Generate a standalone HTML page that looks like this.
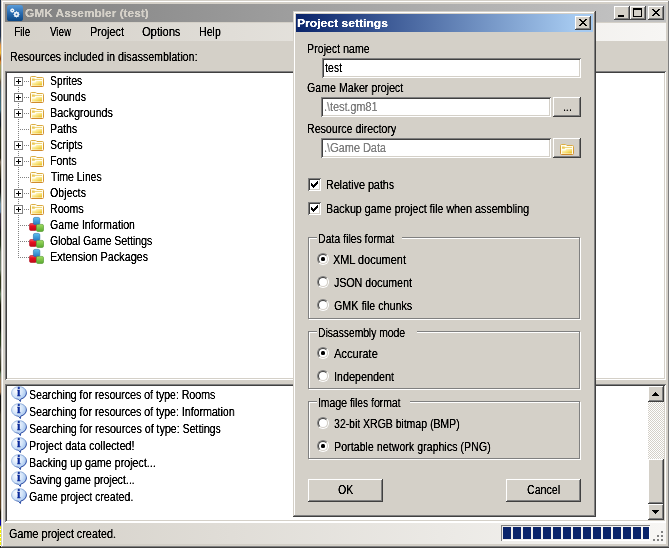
<!DOCTYPE html>
<html><head><meta charset="utf-8"><title>GMK Assembler (test)</title>
<style>
*{box-sizing:border-box;margin:0;padding:0}
html,body{width:669px;height:548px;overflow:hidden;background:#d4d0c8}
body{position:relative;font-family:"Liberation Sans",sans-serif;font-size:12px;color:#000;line-height:14px}
.a{position:absolute}
.t,.b{position:absolute;white-space:nowrap;will-change:transform;transform-origin:0 50%;line-height:14px;filter:url(#th)}
.t{font-size:12px}
.b{font-size:11px;font-weight:bold}
.win{background:#d4d0c8;box-shadow:inset -1px -1px 0 #404040,inset 1px 1px 0 #d4d0c8,inset -2px -2px 0 #808080,inset 2px 2px 0 #fff}
.sunk{background:#fff;box-shadow:inset 1px 1px 0 #808080,inset -1px -1px 0 #fff,inset 2px 2px 0 #404040,inset -2px -2px 0 #d4d0c8}
.btn{background:#d4d0c8;box-shadow:inset -1px -1px 0 #404040,inset 1px 1px 0 #fff,inset -2px -2px 0 #808080,inset 2px 2px 0 #d4d0c8}
.grp{border:1px solid #808080;box-shadow:1px 1px 0 #fff,inset 1px 1px 0 #fff}
.gl{position:absolute;background:#d4d0c8;height:4px}
.hd{background:repeating-linear-gradient(90deg,#808080 0,#808080 1px,transparent 1px,transparent 2px)}
.vd{background:repeating-linear-gradient(#808080 0,#808080 1px,transparent 1px,transparent 2px)}
.k{position:absolute;background:#000}
svg{position:absolute;overflow:visible}
</style></head><body>
<svg width="0" height="0" style="left:0;top:0"><filter id="th" x="0" y="0" width="100%" height="100%" color-interpolation-filters="sRGB"><feComponentTransfer><feFuncA type="linear" slope="1.9" intercept="-0.2"/></feComponentTransfer></filter></svg>

<div class="a" style="left:0;top:0;width:1px;height:527px;background:linear-gradient(#1a2a44 0px,#22304a 36px,#5a6a78 41px,#e09040 45px,#f0c040 53px,#a05818 57px,#804010 59px,#e08830 62px,#a0a060 66px,#909060 78px,#605040 82px,#406070 90px,#407080 110px,#203040 114px,#101820 125px,#303820 130px,#202010 158px,#807060 162px,#504830 167px,#202010 178px,#080808 180px,#101010 192px,#304038 196px,#7090a0 204px,#6080a0 212px,#403848 214px,#302838 225px,#181818 232px,#203018 245px,#607060 252px,#708070 270px,#303818 277px,#303820 288px,#608060 294px,#405038 300px,#181808 305px,#080808 328px,#203818 335px,#304020 345px,#606060 350px,#484838 360px,#303018 370px,#608060 374px,#a08060 380px,#a07850 392px,#101010 396px,#181408 410px,#403820 415px,#403820 460px,#505040 465px,#5a4020 472px,#5a4020 508px,#181408 512px,#181408 519px,#0000a0 520px,#0000a0 525px,#808080 526px,#f4f000 527px)"></div>
<div class="a" style="left:0;top:527px;width:1px;height:19px;background:repeating-linear-gradient(#f4f000 0,#f4f000 2px,#fffff0 2px,#fffff0 3px,#f4f000 3px,#f4f000 4px)"></div>
<div class="a" style="left:0;top:546px;width:1px;height:2px;background:#202020"></div>
<div class="a win" style="left:1px;top:0;width:669px;height:548px"></div>
<div class="a" style="left:5px;top:4px;width:661px;height:18px;background:linear-gradient(90deg,#808080 0,#c0c0c0 92%)"></div>
<svg style="left:7px;top:5px" width="16" height="16" viewBox="0 0 16 16"><defs><linearGradient id="ig" x1="0" y1="0" x2="0" y2="1"><stop offset="0" stop-color="#5a9cd8"/><stop offset=".5" stop-color="#2a6cb0"/><stop offset="1" stop-color="#0a4684"/></linearGradient></defs><rect x="0" y="0" width="16" height="16" rx="2.6" fill="url(#ig)"/><g fill="none" stroke="#fff" opacity=".92"><circle cx="5.300" cy="5.500" r="1.300" stroke-width="1.500"/><circle cx="9.500" cy="9.400" r="1.700" stroke-width="1.700"/><path d="M9.500 6.300v6.200M6.400 9.400h6.200M7.300 7.200l4.400 4.400M11.700 7.200l-4.400 4.400" stroke-width=".9"/><path d="M5.300 3.400v4.200M3.200 5.500h4.200" stroke-width=".8" opacity=".7"/></g><circle cx="9.500" cy="9.400" r=".9" fill="#2a68ac"/><circle cx="5.300" cy="5.500" r=".6" fill="#3c7cc0"/></svg>
<span class="b" style="left:25.00px;top:6px;transform:scaleX(1.0800);color:#d4d0c8">GMK Assembler (test)</span>
<div class="a btn" style="left:614px;top:6px;width:16px;height:14px"></div><div class="k" style="left:618px;top:15px;width:6px;height:2px"></div>
<div class="a btn" style="left:630px;top:6px;width:16px;height:14px"></div><div class="a" style="left:633px;top:8px;width:9px;height:9px;border:1px solid #000;border-top-width:2px"></div>
<div class="a btn" style="left:648px;top:6px;width:16px;height:14px"></div><div class="k" style="left:652px;top:9px;width:2px;height:1px"></div><div class="k" style="left:658px;top:9px;width:2px;height:1px"></div><div class="k" style="left:653px;top:10px;width:2px;height:1px"></div><div class="k" style="left:657px;top:10px;width:2px;height:1px"></div><div class="k" style="left:654px;top:11px;width:4px;height:1px"></div><div class="k" style="left:655px;top:12px;width:2px;height:1px"></div><div class="k" style="left:654px;top:13px;width:4px;height:1px"></div><div class="k" style="left:653px;top:14px;width:2px;height:1px"></div><div class="k" style="left:657px;top:14px;width:2px;height:1px"></div><div class="k" style="left:652px;top:15px;width:2px;height:1px"></div><div class="k" style="left:658px;top:15px;width:2px;height:1px"></div>
<div class="a" style="left:5px;top:23px;width:661px;height:18px;background:linear-gradient(90deg,#d4d0c8,#f7f6f4)"></div>
<span class="t" style="left:13.60px;top:25px;transform:scaleX(0.8352)">File</span>
<span class="t" style="left:50.30px;top:25px;transform:scaleX(0.8157)">View</span>
<span class="t" style="left:89.60px;top:25px;transform:scaleX(0.9099)">Project</span>
<span class="t" style="left:142.00px;top:25px;transform:scaleX(0.9305)">Options</span>
<span class="t" style="left:199.00px;top:25px;transform:scaleX(0.8850)">Help</span>
<span class="t" style="left:9.60px;top:50px;transform:scaleX(0.8893)">Resources included in disassemblation:</span>
<div class="a sunk" style="left:5px;top:71px;width:661px;height:309px"></div>
<div class="a vd" style="left:18px;top:83px;width:1px;height:175px"></div>
<div class="a hd" style="left:24px;top:81px;width:5px;height:1px"></div>
<div class="a" style="left:14px;top:77px;width:9px;height:9px;border:1px solid #808080;background:#fff"></div>
<div class="k" style="left:16px;top:81px;width:5px;height:1px"></div>
<div class="k" style="left:18px;top:79px;width:1px;height:5px"></div>
<svg style="left:29px;top:73px" width="16" height="16" viewBox="0 0 16 16"><defs><linearGradient id="fg0" x1="0" y1="0" x2="1" y2="1"><stop offset="0" stop-color="#fffbe0"/><stop offset=".45" stop-color="#fbe88a"/><stop offset="1" stop-color="#e8bc1c"/></linearGradient><linearGradient id="fs0" x1="0" y1="0" x2="0" y2="1"><stop offset="0" stop-color="#dcae44"/><stop offset="1" stop-color="#d08a2c"/></linearGradient></defs><path d="M1.500 4.500q0-1 1-1h4q.7 0 1 .5l.5.500h5.500q1 0 1 1v7q0 1-1 1h-11q-1 0-1-1z" fill="#fffdf0" stroke="url(#fs0)"/><path d="M3 5.400h2.600v.8H13v.9H6.200l-.6.700H3z" fill="#ecca58"/><path d="M3 9.400h3.400l1-1.300H13v4.300H3z" fill="url(#fg0)"/></svg>
<span class="t" style="left:50.10px;top:74px;transform:scaleX(0.8601)">Sprites</span>
<div class="a hd" style="left:24px;top:97px;width:5px;height:1px"></div>
<div class="a" style="left:14px;top:93px;width:9px;height:9px;border:1px solid #808080;background:#fff"></div>
<div class="k" style="left:16px;top:97px;width:5px;height:1px"></div>
<div class="k" style="left:18px;top:95px;width:1px;height:5px"></div>
<svg style="left:29px;top:89px" width="16" height="16" viewBox="0 0 16 16"><defs><linearGradient id="fg1" x1="0" y1="0" x2="1" y2="1"><stop offset="0" stop-color="#fffbe0"/><stop offset=".45" stop-color="#fbe88a"/><stop offset="1" stop-color="#e8bc1c"/></linearGradient><linearGradient id="fs1" x1="0" y1="0" x2="0" y2="1"><stop offset="0" stop-color="#dcae44"/><stop offset="1" stop-color="#d08a2c"/></linearGradient></defs><path d="M1.500 4.500q0-1 1-1h4q.7 0 1 .5l.5.500h5.500q1 0 1 1v7q0 1-1 1h-11q-1 0-1-1z" fill="#fffdf0" stroke="url(#fs1)"/><path d="M3 5.400h2.600v.8H13v.9H6.200l-.6.700H3z" fill="#ecca58"/><path d="M3 9.400h3.400l1-1.300H13v4.300H3z" fill="url(#fg1)"/></svg>
<span class="t" style="left:50.10px;top:90px;transform:scaleX(0.8850)">Sounds</span>
<div class="a hd" style="left:24px;top:113px;width:5px;height:1px"></div>
<div class="a" style="left:14px;top:109px;width:9px;height:9px;border:1px solid #808080;background:#fff"></div>
<div class="k" style="left:16px;top:113px;width:5px;height:1px"></div>
<div class="k" style="left:18px;top:111px;width:1px;height:5px"></div>
<svg style="left:29px;top:105px" width="16" height="16" viewBox="0 0 16 16"><defs><linearGradient id="fg2" x1="0" y1="0" x2="1" y2="1"><stop offset="0" stop-color="#fffbe0"/><stop offset=".45" stop-color="#fbe88a"/><stop offset="1" stop-color="#e8bc1c"/></linearGradient><linearGradient id="fs2" x1="0" y1="0" x2="0" y2="1"><stop offset="0" stop-color="#dcae44"/><stop offset="1" stop-color="#d08a2c"/></linearGradient></defs><path d="M1.500 4.500q0-1 1-1h4q.7 0 1 .5l.5.500h5.500q1 0 1 1v7q0 1-1 1h-11q-1 0-1-1z" fill="#fffdf0" stroke="url(#fs2)"/><path d="M3 5.400h2.600v.8H13v.9H6.200l-.6.700H3z" fill="#ecca58"/><path d="M3 9.400h3.400l1-1.300H13v4.300H3z" fill="url(#fg2)"/></svg>
<span class="t" style="left:50.10px;top:106px;transform:scaleX(0.8981)">Backgrounds</span>
<div class="a hd" style="left:20px;top:129px;width:9px;height:1px"></div>
<svg style="left:29px;top:121px" width="16" height="16" viewBox="0 0 16 16"><defs><linearGradient id="fg3" x1="0" y1="0" x2="1" y2="1"><stop offset="0" stop-color="#fffbe0"/><stop offset=".45" stop-color="#fbe88a"/><stop offset="1" stop-color="#e8bc1c"/></linearGradient><linearGradient id="fs3" x1="0" y1="0" x2="0" y2="1"><stop offset="0" stop-color="#dcae44"/><stop offset="1" stop-color="#d08a2c"/></linearGradient></defs><path d="M1.500 4.500q0-1 1-1h4q.7 0 1 .5l.5.500h5.500q1 0 1 1v7q0 1-1 1h-11q-1 0-1-1z" fill="#fffdf0" stroke="url(#fs3)"/><path d="M3 5.400h2.600v.8H13v.9H6.200l-.6.700H3z" fill="#ecca58"/><path d="M3 9.400h3.400l1-1.300H13v4.300H3z" fill="url(#fg3)"/></svg>
<span class="t" style="left:50.10px;top:122px;transform:scaleX(0.8850)">Paths</span>
<div class="a hd" style="left:24px;top:145px;width:5px;height:1px"></div>
<div class="a" style="left:14px;top:141px;width:9px;height:9px;border:1px solid #808080;background:#fff"></div>
<div class="k" style="left:16px;top:145px;width:5px;height:1px"></div>
<div class="k" style="left:18px;top:143px;width:1px;height:5px"></div>
<svg style="left:29px;top:137px" width="16" height="16" viewBox="0 0 16 16"><defs><linearGradient id="fg4" x1="0" y1="0" x2="1" y2="1"><stop offset="0" stop-color="#fffbe0"/><stop offset=".45" stop-color="#fbe88a"/><stop offset="1" stop-color="#e8bc1c"/></linearGradient><linearGradient id="fs4" x1="0" y1="0" x2="0" y2="1"><stop offset="0" stop-color="#dcae44"/><stop offset="1" stop-color="#d08a2c"/></linearGradient></defs><path d="M1.500 4.500q0-1 1-1h4q.7 0 1 .5l.5.500h5.500q1 0 1 1v7q0 1-1 1h-11q-1 0-1-1z" fill="#fffdf0" stroke="url(#fs4)"/><path d="M3 5.400h2.600v.8H13v.9H6.200l-.6.700H3z" fill="#ecca58"/><path d="M3 9.400h3.400l1-1.300H13v4.300H3z" fill="url(#fg4)"/></svg>
<span class="t" style="left:50.10px;top:138px;transform:scaleX(0.8850)">Scripts</span>
<div class="a hd" style="left:24px;top:161px;width:5px;height:1px"></div>
<div class="a" style="left:14px;top:157px;width:9px;height:9px;border:1px solid #808080;background:#fff"></div>
<div class="k" style="left:16px;top:161px;width:5px;height:1px"></div>
<div class="k" style="left:18px;top:159px;width:1px;height:5px"></div>
<svg style="left:29px;top:153px" width="16" height="16" viewBox="0 0 16 16"><defs><linearGradient id="fg5" x1="0" y1="0" x2="1" y2="1"><stop offset="0" stop-color="#fffbe0"/><stop offset=".45" stop-color="#fbe88a"/><stop offset="1" stop-color="#e8bc1c"/></linearGradient><linearGradient id="fs5" x1="0" y1="0" x2="0" y2="1"><stop offset="0" stop-color="#dcae44"/><stop offset="1" stop-color="#d08a2c"/></linearGradient></defs><path d="M1.500 4.500q0-1 1-1h4q.7 0 1 .5l.5.500h5.500q1 0 1 1v7q0 1-1 1h-11q-1 0-1-1z" fill="#fffdf0" stroke="url(#fs5)"/><path d="M3 5.400h2.600v.8H13v.9H6.200l-.6.700H3z" fill="#ecca58"/><path d="M3 9.400h3.400l1-1.300H13v4.300H3z" fill="url(#fg5)"/></svg>
<span class="t" style="left:50.10px;top:154px;transform:scaleX(0.8850)">Fonts</span>
<div class="a hd" style="left:20px;top:177px;width:9px;height:1px"></div>
<svg style="left:29px;top:169px" width="16" height="16" viewBox="0 0 16 16"><defs><linearGradient id="fg6" x1="0" y1="0" x2="1" y2="1"><stop offset="0" stop-color="#fffbe0"/><stop offset=".45" stop-color="#fbe88a"/><stop offset="1" stop-color="#e8bc1c"/></linearGradient><linearGradient id="fs6" x1="0" y1="0" x2="0" y2="1"><stop offset="0" stop-color="#dcae44"/><stop offset="1" stop-color="#d08a2c"/></linearGradient></defs><path d="M1.500 4.500q0-1 1-1h4q.7 0 1 .5l.5.500h5.500q1 0 1 1v7q0 1-1 1h-11q-1 0-1-1z" fill="#fffdf0" stroke="url(#fs6)"/><path d="M3 5.400h2.600v.8H13v.9H6.200l-.6.700H3z" fill="#ecca58"/><path d="M3 9.400h3.400l1-1.300H13v4.300H3z" fill="url(#fg6)"/></svg>
<span class="t" style="left:51.00px;top:170px;transform:scaleX(0.8694)">Time Lines</span>
<div class="a hd" style="left:24px;top:193px;width:5px;height:1px"></div>
<div class="a" style="left:14px;top:189px;width:9px;height:9px;border:1px solid #808080;background:#fff"></div>
<div class="k" style="left:16px;top:193px;width:5px;height:1px"></div>
<div class="k" style="left:18px;top:191px;width:1px;height:5px"></div>
<svg style="left:29px;top:185px" width="16" height="16" viewBox="0 0 16 16"><defs><linearGradient id="fg7" x1="0" y1="0" x2="1" y2="1"><stop offset="0" stop-color="#fffbe0"/><stop offset=".45" stop-color="#fbe88a"/><stop offset="1" stop-color="#e8bc1c"/></linearGradient><linearGradient id="fs7" x1="0" y1="0" x2="0" y2="1"><stop offset="0" stop-color="#dcae44"/><stop offset="1" stop-color="#d08a2c"/></linearGradient></defs><path d="M1.500 4.500q0-1 1-1h4q.7 0 1 .5l.5.500h5.500q1 0 1 1v7q0 1-1 1h-11q-1 0-1-1z" fill="#fffdf0" stroke="url(#fs7)"/><path d="M3 5.400h2.600v.8H13v.9H6.200l-.6.700H3z" fill="#ecca58"/><path d="M3 9.400h3.400l1-1.300H13v4.300H3z" fill="url(#fg7)"/></svg>
<span class="t" style="left:50.10px;top:186px;transform:scaleX(0.8850)">Objects</span>
<div class="a hd" style="left:24px;top:209px;width:5px;height:1px"></div>
<div class="a" style="left:14px;top:205px;width:9px;height:9px;border:1px solid #808080;background:#fff"></div>
<div class="k" style="left:16px;top:209px;width:5px;height:1px"></div>
<div class="k" style="left:18px;top:207px;width:1px;height:5px"></div>
<svg style="left:29px;top:201px" width="16" height="16" viewBox="0 0 16 16"><defs><linearGradient id="fg8" x1="0" y1="0" x2="1" y2="1"><stop offset="0" stop-color="#fffbe0"/><stop offset=".45" stop-color="#fbe88a"/><stop offset="1" stop-color="#e8bc1c"/></linearGradient><linearGradient id="fs8" x1="0" y1="0" x2="0" y2="1"><stop offset="0" stop-color="#dcae44"/><stop offset="1" stop-color="#d08a2c"/></linearGradient></defs><path d="M1.500 4.500q0-1 1-1h4q.7 0 1 .5l.5.500h5.500q1 0 1 1v7q0 1-1 1h-11q-1 0-1-1z" fill="#fffdf0" stroke="url(#fs8)"/><path d="M3 5.400h2.600v.8H13v.9H6.200l-.6.700H3z" fill="#ecca58"/><path d="M3 9.400h3.400l1-1.300H13v4.300H3z" fill="url(#fg8)"/></svg>
<span class="t" style="left:50.10px;top:202px;transform:scaleX(0.8850)">Rooms</span>
<div class="a hd" style="left:20px;top:225px;width:9px;height:1px"></div>
<svg style="left:29px;top:217px" width="16" height="16" viewBox="0 0 16 16"><defs><linearGradient id="cb9" x1="0" y1="0" x2="0" y2="1"><stop offset="0" stop-color="#5cc0f0"/><stop offset="1" stop-color="#2878c0"/></linearGradient><linearGradient id="cr9" x1="0" y1="0" x2="0" y2="1"><stop offset="0" stop-color="#f86068"/><stop offset=".35" stop-color="#e81020"/><stop offset="1" stop-color="#c00818"/></linearGradient><linearGradient id="cg9" x1="0" y1="0" x2="0" y2="1"><stop offset="0" stop-color="#a0dc60"/><stop offset="1" stop-color="#58a830"/></linearGradient></defs><rect x=".5" y="6.500" width="7" height="7" rx="1.400" fill="url(#cr9)" stroke="#b01020" stroke-width=".6"/><rect x="4.400" y=".4" width="6.400" height="7.200" rx="1.500" fill="url(#cb9)" stroke="#2468a8" stroke-width=".6"/><rect x="7.400" y="7.400" width="7.100" height="7.100" rx="1.400" fill="url(#cg9)" stroke="#4c9428" stroke-width=".6"/></svg>
<span class="t" style="left:50.10px;top:218px;transform:scaleX(0.8850)">Game Information</span>
<div class="a hd" style="left:20px;top:241px;width:9px;height:1px"></div>
<svg style="left:29px;top:233px" width="16" height="16" viewBox="0 0 16 16"><defs><linearGradient id="cb10" x1="0" y1="0" x2="0" y2="1"><stop offset="0" stop-color="#5cc0f0"/><stop offset="1" stop-color="#2878c0"/></linearGradient><linearGradient id="cr10" x1="0" y1="0" x2="0" y2="1"><stop offset="0" stop-color="#f86068"/><stop offset=".35" stop-color="#e81020"/><stop offset="1" stop-color="#c00818"/></linearGradient><linearGradient id="cg10" x1="0" y1="0" x2="0" y2="1"><stop offset="0" stop-color="#a0dc60"/><stop offset="1" stop-color="#58a830"/></linearGradient></defs><rect x=".5" y="6.500" width="7" height="7" rx="1.400" fill="url(#cr10)" stroke="#b01020" stroke-width=".6"/><rect x="4.400" y=".4" width="6.400" height="7.200" rx="1.500" fill="url(#cb10)" stroke="#2468a8" stroke-width=".6"/><rect x="7.400" y="7.400" width="7.100" height="7.100" rx="1.400" fill="url(#cg10)" stroke="#4c9428" stroke-width=".6"/></svg>
<span class="t" style="left:50.10px;top:234px;transform:scaleX(0.8695)">Global Game Settings</span>
<div class="a hd" style="left:20px;top:257px;width:9px;height:1px"></div>
<svg style="left:29px;top:249px" width="16" height="16" viewBox="0 0 16 16"><defs><linearGradient id="cb11" x1="0" y1="0" x2="0" y2="1"><stop offset="0" stop-color="#5cc0f0"/><stop offset="1" stop-color="#2878c0"/></linearGradient><linearGradient id="cr11" x1="0" y1="0" x2="0" y2="1"><stop offset="0" stop-color="#f86068"/><stop offset=".35" stop-color="#e81020"/><stop offset="1" stop-color="#c00818"/></linearGradient><linearGradient id="cg11" x1="0" y1="0" x2="0" y2="1"><stop offset="0" stop-color="#a0dc60"/><stop offset="1" stop-color="#58a830"/></linearGradient></defs><rect x=".5" y="6.500" width="7" height="7" rx="1.400" fill="url(#cr11)" stroke="#b01020" stroke-width=".6"/><rect x="4.400" y=".4" width="6.400" height="7.200" rx="1.500" fill="url(#cb11)" stroke="#2468a8" stroke-width=".6"/><rect x="7.400" y="7.400" width="7.100" height="7.100" rx="1.400" fill="url(#cg11)" stroke="#4c9428" stroke-width=".6"/></svg>
<span class="t" style="left:50.10px;top:250px;transform:scaleX(0.9018)">Extension Packages</span>
<div class="a sunk" style="left:5px;top:384px;width:661px;height:138px"></div>
<svg style="left:11px;top:386px;will-change:transform" width="16" height="16" viewBox="0 0 16 16"><defs><radialGradient id="ib0" cx=".35" cy=".3" r=".8"><stop offset="0" stop-color="#fff"/><stop offset=".5" stop-color="#d0e2f8"/><stop offset="1" stop-color="#8cb4e8"/></radialGradient><linearGradient id="is0" x1="0" y1="0" x2="1" y2="1"><stop offset="0" stop-color="#b8cce8"/><stop offset=".45" stop-color="#88a8d8"/><stop offset=".75" stop-color="#2c4ca4"/><stop offset="1" stop-color="#0c2484"/></linearGradient></defs><path d="M8 .6c4.100 0 7.400 2.800 7.400 6.300 0 3-2.400 5.400-5.600 6.100L9.400 15.500 7.300 13.200C3.500 12.900.6 10.200.6 6.900.6 3.400 3.900.6 8 .6z" fill="url(#ib0)" stroke="url(#is0)" stroke-width="1"/><text x="7.700" y="10" font-family="Liberation Serif,serif" font-weight="bold" font-size="12.500" text-anchor="middle" fill="#0c2c9c" stroke="#0c2c9c" stroke-width=".3">i</text></svg>
<span class="t" style="left:29.30px;top:388px;transform:scaleX(0.8807)">Searching for resources of type: Rooms</span>
<svg style="left:11px;top:403px;will-change:transform" width="16" height="16" viewBox="0 0 16 16"><defs><radialGradient id="ib1" cx=".35" cy=".3" r=".8"><stop offset="0" stop-color="#fff"/><stop offset=".5" stop-color="#d0e2f8"/><stop offset="1" stop-color="#8cb4e8"/></radialGradient><linearGradient id="is1" x1="0" y1="0" x2="1" y2="1"><stop offset="0" stop-color="#b8cce8"/><stop offset=".45" stop-color="#88a8d8"/><stop offset=".75" stop-color="#2c4ca4"/><stop offset="1" stop-color="#0c2484"/></linearGradient></defs><path d="M8 .6c4.100 0 7.400 2.800 7.400 6.300 0 3-2.400 5.400-5.600 6.100L9.400 15.500 7.300 13.200C3.500 12.900.6 10.200.6 6.900.6 3.400 3.900.6 8 .6z" fill="url(#ib1)" stroke="url(#is1)" stroke-width="1"/><text x="7.700" y="10" font-family="Liberation Serif,serif" font-weight="bold" font-size="12.500" text-anchor="middle" fill="#0c2c9c" stroke="#0c2c9c" stroke-width=".3">i</text></svg>
<span class="t" style="left:29.30px;top:405px;transform:scaleX(0.8811)">Searching for resources of type: Information</span>
<svg style="left:11px;top:420px;will-change:transform" width="16" height="16" viewBox="0 0 16 16"><defs><radialGradient id="ib2" cx=".35" cy=".3" r=".8"><stop offset="0" stop-color="#fff"/><stop offset=".5" stop-color="#d0e2f8"/><stop offset="1" stop-color="#8cb4e8"/></radialGradient><linearGradient id="is2" x1="0" y1="0" x2="1" y2="1"><stop offset="0" stop-color="#b8cce8"/><stop offset=".45" stop-color="#88a8d8"/><stop offset=".75" stop-color="#2c4ca4"/><stop offset="1" stop-color="#0c2484"/></linearGradient></defs><path d="M8 .6c4.100 0 7.400 2.800 7.400 6.300 0 3-2.400 5.400-5.600 6.100L9.400 15.500 7.300 13.200C3.500 12.900.6 10.200.6 6.900.6 3.400 3.900.6 8 .6z" fill="url(#ib2)" stroke="url(#is2)" stroke-width="1"/><text x="7.700" y="10" font-family="Liberation Serif,serif" font-weight="bold" font-size="12.500" text-anchor="middle" fill="#0c2c9c" stroke="#0c2c9c" stroke-width=".3">i</text></svg>
<span class="t" style="left:29.30px;top:422px;transform:scaleX(0.8850)">Searching for resources of type: Settings</span>
<svg style="left:11px;top:437px;will-change:transform" width="16" height="16" viewBox="0 0 16 16"><defs><radialGradient id="ib3" cx=".35" cy=".3" r=".8"><stop offset="0" stop-color="#fff"/><stop offset=".5" stop-color="#d0e2f8"/><stop offset="1" stop-color="#8cb4e8"/></radialGradient><linearGradient id="is3" x1="0" y1="0" x2="1" y2="1"><stop offset="0" stop-color="#b8cce8"/><stop offset=".45" stop-color="#88a8d8"/><stop offset=".75" stop-color="#2c4ca4"/><stop offset="1" stop-color="#0c2484"/></linearGradient></defs><path d="M8 .6c4.100 0 7.400 2.800 7.400 6.300 0 3-2.400 5.400-5.600 6.100L9.400 15.500 7.300 13.200C3.500 12.900.6 10.200.6 6.900.6 3.400 3.900.6 8 .6z" fill="url(#ib3)" stroke="url(#is3)" stroke-width="1"/><text x="7.700" y="10" font-family="Liberation Serif,serif" font-weight="bold" font-size="12.500" text-anchor="middle" fill="#0c2c9c" stroke="#0c2c9c" stroke-width=".3">i</text></svg>
<span class="t" style="left:29.30px;top:439px;transform:scaleX(0.8927)">Project data collected!</span>
<svg style="left:11px;top:454px;will-change:transform" width="16" height="16" viewBox="0 0 16 16"><defs><radialGradient id="ib4" cx=".35" cy=".3" r=".8"><stop offset="0" stop-color="#fff"/><stop offset=".5" stop-color="#d0e2f8"/><stop offset="1" stop-color="#8cb4e8"/></radialGradient><linearGradient id="is4" x1="0" y1="0" x2="1" y2="1"><stop offset="0" stop-color="#b8cce8"/><stop offset=".45" stop-color="#88a8d8"/><stop offset=".75" stop-color="#2c4ca4"/><stop offset="1" stop-color="#0c2484"/></linearGradient></defs><path d="M8 .6c4.100 0 7.400 2.800 7.400 6.300 0 3-2.400 5.400-5.600 6.100L9.400 15.500 7.300 13.200C3.500 12.900.6 10.200.6 6.900.6 3.400 3.900.6 8 .6z" fill="url(#ib4)" stroke="url(#is4)" stroke-width="1"/><text x="7.700" y="10" font-family="Liberation Serif,serif" font-weight="bold" font-size="12.500" text-anchor="middle" fill="#0c2c9c" stroke="#0c2c9c" stroke-width=".3">i</text></svg>
<span class="t" style="left:29.30px;top:456px;transform:scaleX(0.8914)">Backing up game project...</span>
<svg style="left:11px;top:471px;will-change:transform" width="16" height="16" viewBox="0 0 16 16"><defs><radialGradient id="ib5" cx=".35" cy=".3" r=".8"><stop offset="0" stop-color="#fff"/><stop offset=".5" stop-color="#d0e2f8"/><stop offset="1" stop-color="#8cb4e8"/></radialGradient><linearGradient id="is5" x1="0" y1="0" x2="1" y2="1"><stop offset="0" stop-color="#b8cce8"/><stop offset=".45" stop-color="#88a8d8"/><stop offset=".75" stop-color="#2c4ca4"/><stop offset="1" stop-color="#0c2484"/></linearGradient></defs><path d="M8 .6c4.100 0 7.400 2.800 7.400 6.300 0 3-2.400 5.400-5.600 6.100L9.400 15.500 7.300 13.200C3.500 12.900.6 10.200.6 6.900.6 3.400 3.900.6 8 .6z" fill="url(#ib5)" stroke="url(#is5)" stroke-width="1"/><text x="7.700" y="10" font-family="Liberation Serif,serif" font-weight="bold" font-size="12.500" text-anchor="middle" fill="#0c2c9c" stroke="#0c2c9c" stroke-width=".3">i</text></svg>
<span class="t" style="left:29.30px;top:473px;transform:scaleX(0.8850)">Saving game project...</span>
<svg style="left:11px;top:488px;will-change:transform" width="16" height="16" viewBox="0 0 16 16"><defs><radialGradient id="ib6" cx=".35" cy=".3" r=".8"><stop offset="0" stop-color="#fff"/><stop offset=".5" stop-color="#d0e2f8"/><stop offset="1" stop-color="#8cb4e8"/></radialGradient><linearGradient id="is6" x1="0" y1="0" x2="1" y2="1"><stop offset="0" stop-color="#b8cce8"/><stop offset=".45" stop-color="#88a8d8"/><stop offset=".75" stop-color="#2c4ca4"/><stop offset="1" stop-color="#0c2484"/></linearGradient></defs><path d="M8 .6c4.100 0 7.400 2.800 7.400 6.300 0 3-2.400 5.400-5.600 6.100L9.400 15.500 7.300 13.200C3.500 12.900.6 10.200.6 6.900.6 3.400 3.900.6 8 .6z" fill="url(#ib6)" stroke="url(#is6)" stroke-width="1"/><text x="7.700" y="10" font-family="Liberation Serif,serif" font-weight="bold" font-size="12.500" text-anchor="middle" fill="#0c2c9c" stroke="#0c2c9c" stroke-width=".3">i</text></svg>
<span class="t" style="left:29.30px;top:490px;transform:scaleX(0.8773)">Game project created.</span>
<div class="a" style="left:648px;top:386px;width:16px;height:134px;background:repeating-conic-gradient(#fff 0 25%,#d4d0c8 0 50%) 0 0/2px 2px"></div>
<div class="a btn" style="left:648px;top:386px;width:16px;height:16px"></div>
<div class="k" style="left:655px;top:392px;width:1px;height:1px"></div><div class="k" style="left:654px;top:393px;width:3px;height:1px"></div><div class="k" style="left:653px;top:394px;width:5px;height:1px"></div><div class="k" style="left:652px;top:395px;width:7px;height:1px"></div>
<div class="a btn" style="left:648px;top:504px;width:16px;height:16px"></div>
<div class="k" style="left:652px;top:510px;width:7px;height:1px"></div><div class="k" style="left:653px;top:511px;width:5px;height:1px"></div><div class="k" style="left:654px;top:512px;width:3px;height:1px"></div><div class="k" style="left:655px;top:513px;width:1px;height:1px"></div>
<div class="a btn" style="left:648px;top:459px;width:16px;height:45px"></div>
<div class="a" style="left:5px;top:522px;width:661px;height:1px;background:#fff"></div>
<div class="a" style="left:5px;top:523px;width:661px;height:21px;background:linear-gradient(90deg,#d4d0c8,#f7f6f4)"></div>
<span class="t" style="left:9.20px;top:527px;transform:scaleX(0.9003)">Game project created.</span>
<div class="a" style="left:501px;top:525px;width:149px;height:16px;box-shadow:inset 1px 1px 0 #808080,inset -1px -1px 0 #fff"></div>
<div class="k" style="left:503px;top:527px;width:8px;height:12px;background:#0a246a"></div>
<div class="k" style="left:513px;top:527px;width:8px;height:12px;background:#0a246a"></div>
<div class="k" style="left:523px;top:527px;width:8px;height:12px;background:#0a246a"></div>
<div class="k" style="left:533px;top:527px;width:8px;height:12px;background:#0a246a"></div>
<div class="k" style="left:543px;top:527px;width:8px;height:12px;background:#0a246a"></div>
<div class="k" style="left:553px;top:527px;width:8px;height:12px;background:#0a246a"></div>
<div class="k" style="left:563px;top:527px;width:8px;height:12px;background:#0a246a"></div>
<div class="k" style="left:573px;top:527px;width:8px;height:12px;background:#0a246a"></div>
<div class="k" style="left:583px;top:527px;width:8px;height:12px;background:#0a246a"></div>
<div class="k" style="left:593px;top:527px;width:8px;height:12px;background:#0a246a"></div>
<div class="k" style="left:603px;top:527px;width:8px;height:12px;background:#0a246a"></div>
<div class="k" style="left:613px;top:527px;width:8px;height:12px;background:#0a246a"></div>
<div class="k" style="left:623px;top:527px;width:8px;height:12px;background:#0a246a"></div>
<div class="k" style="left:633px;top:527px;width:8px;height:12px;background:#0a246a"></div>
<div class="k" style="left:643px;top:527px;width:6px;height:12px;background:#0a246a"></div>
<div class="k" style="left:661px;top:539px;width:2px;height:2px;background:#808080"></div>
<div class="k" style="left:661px;top:535px;width:2px;height:2px;background:#808080"></div>
<div class="k" style="left:657px;top:539px;width:2px;height:2px;background:#808080"></div>
<div class="k" style="left:661px;top:531px;width:2px;height:2px;background:#808080"></div>
<div class="k" style="left:657px;top:535px;width:2px;height:2px;background:#808080"></div>
<div class="k" style="left:653px;top:539px;width:2px;height:2px;background:#808080"></div>
<div class="a win" style="left:293px;top:11px;width:303px;height:506px"></div>
<div class="a" style="left:296px;top:14px;width:297px;height:18px;background:linear-gradient(90deg,#0a246a 0,#a6caf0 94%)"></div>
<span class="b" style="left:297.00px;top:16px;transform:scaleX(1.1022);color:#fff">Project settings</span>
<div class="a btn" style="left:575px;top:16px;width:16px;height:14px"></div><div class="k" style="left:579px;top:19px;width:2px;height:1px"></div><div class="k" style="left:585px;top:19px;width:2px;height:1px"></div><div class="k" style="left:580px;top:20px;width:2px;height:1px"></div><div class="k" style="left:584px;top:20px;width:2px;height:1px"></div><div class="k" style="left:581px;top:21px;width:4px;height:1px"></div><div class="k" style="left:582px;top:22px;width:2px;height:1px"></div><div class="k" style="left:581px;top:23px;width:4px;height:1px"></div><div class="k" style="left:580px;top:24px;width:2px;height:1px"></div><div class="k" style="left:584px;top:24px;width:2px;height:1px"></div><div class="k" style="left:579px;top:25px;width:2px;height:1px"></div><div class="k" style="left:585px;top:25px;width:2px;height:1px"></div>
<span class="t" style="left:307.30px;top:42px;transform:scaleX(0.8850)">Project name</span>
<div class="a sunk" style="left:322px;top:58px;width:259px;height:20px"></div>
<span class="t" style="left:324.70px;top:61px;transform:scaleX(0.8850)">test</span>
<span class="t" style="left:307.30px;top:81px;transform:scaleX(0.8850)">Game Maker project</span>
<div class="a sunk" style="left:321px;top:97px;width:230px;height:20px"></div>
<span class="t" style="left:323.50px;top:100px;transform:scaleX(0.9006);color:#808080">.\test.gm81</span>
<div class="a btn" style="left:553px;top:97px;width:28px;height:20px"></div>
<span class="t" style="left:562.50px;top:100px;transform:scaleX(0.8850)">...</span>
<span class="t" style="left:307.30px;top:122px;transform:scaleX(0.8850)">Resource directory</span>
<div class="a sunk" style="left:321px;top:138px;width:230px;height:20px"></div>
<span class="t" style="left:323.50px;top:141px;transform:scaleX(0.9120);color:#808080">.\Game Data</span>
<div class="a btn" style="left:553px;top:138px;width:28px;height:20px"></div>
<svg style="left:559px;top:141px" width="16" height="16" viewBox="0 0 16 16"><defs><linearGradient id="fgb" x1="0" y1="0" x2="1" y2="1"><stop offset="0" stop-color="#fffbe0"/><stop offset=".45" stop-color="#fbe88a"/><stop offset="1" stop-color="#e8bc1c"/></linearGradient><linearGradient id="fsb" x1="0" y1="0" x2="0" y2="1"><stop offset="0" stop-color="#dcae44"/><stop offset="1" stop-color="#d08a2c"/></linearGradient></defs><path d="M1.500 4.500q0-1 1-1h4q.7 0 1 .5l.5.500h5.500q1 0 1 1v7q0 1-1 1h-11q-1 0-1-1z" fill="#fffdf0" stroke="url(#fsb)"/><path d="M3 5.400h2.600v.8H13v.9H6.200l-.6.700H3z" fill="#ecca58"/><path d="M3 9.400h3.400l1-1.300H13v4.300H3z" fill="url(#fgb)"/></svg>
<div class="a sunk" style="left:308px;top:178px;width:13px;height:13px"></div><div class="k" style="left:311px;top:183px;width:1px;height:3px"></div><div class="k" style="left:312px;top:184px;width:1px;height:3px"></div><div class="k" style="left:313px;top:185px;width:1px;height:3px"></div><div class="k" style="left:314px;top:184px;width:1px;height:3px"></div><div class="k" style="left:315px;top:183px;width:1px;height:3px"></div><div class="k" style="left:316px;top:182px;width:1px;height:3px"></div><div class="k" style="left:317px;top:181px;width:1px;height:3px"></div><span class="t" style="left:326.20px;top:178px;transform:scaleX(0.8971)">Relative paths</span>
<div class="a sunk" style="left:308px;top:202px;width:13px;height:13px"></div><div class="k" style="left:311px;top:207px;width:1px;height:3px"></div><div class="k" style="left:312px;top:208px;width:1px;height:3px"></div><div class="k" style="left:313px;top:209px;width:1px;height:3px"></div><div class="k" style="left:314px;top:208px;width:1px;height:3px"></div><div class="k" style="left:315px;top:207px;width:1px;height:3px"></div><div class="k" style="left:316px;top:206px;width:1px;height:3px"></div><div class="k" style="left:317px;top:205px;width:1px;height:3px"></div><span class="t" style="left:326.20px;top:202px;transform:scaleX(0.8930)">Backup game project file when assembling</span>
<div class="a grp" style="left:308px;top:237px;width:272px;height:82px"></div><div class="gl" style="left:317px;top:236px;width:85px"></div><span class="t" style="left:318.20px;top:232px;transform:scaleX(0.8745)">Data files format</span><div class="a" style="left:317px;top:253px;width:12px;height:12px;border-radius:50%;border:1px solid;border-color:#808080 #fff #fff #808080;transform:rotate(0deg)"></div><div class="a" style="left:318px;top:254px;width:10px;height:10px;border-radius:50%;background:#fff;border:1px solid;border-color:#404040 #d4d0c8 #d4d0c8 #404040"></div><div class="a" style="left:321px;top:257px;width:4px;height:4px;border-radius:1.500px;background:#000"></div><span class="t" style="left:333.00px;top:253px;transform:scaleX(0.9078)">XML document</span><div class="a" style="left:317px;top:276px;width:12px;height:12px;border-radius:50%;border:1px solid;border-color:#808080 #fff #fff #808080;transform:rotate(0deg)"></div><div class="a" style="left:318px;top:277px;width:10px;height:10px;border-radius:50%;background:#fff;border:1px solid;border-color:#404040 #d4d0c8 #d4d0c8 #404040"></div><span class="t" style="left:333.90px;top:276px;transform:scaleX(0.8850)">JSON document</span><div class="a" style="left:317px;top:299px;width:12px;height:12px;border-radius:50%;border:1px solid;border-color:#808080 #fff #fff #808080;transform:rotate(0deg)"></div><div class="a" style="left:318px;top:300px;width:10px;height:10px;border-radius:50%;background:#fff;border:1px solid;border-color:#404040 #d4d0c8 #d4d0c8 #404040"></div><span class="t" style="left:333.60px;top:299px;transform:scaleX(0.8955)">GMK file chunks</span>
<div class="a grp" style="left:308px;top:331px;width:272px;height:58px"></div><div class="gl" style="left:317px;top:330px;width:100px"></div><span class="t" style="left:317.60px;top:326px;transform:scaleX(0.8579)">Disassembly mode</span><div class="a" style="left:317px;top:347px;width:12px;height:12px;border-radius:50%;border:1px solid;border-color:#808080 #fff #fff #808080;transform:rotate(0deg)"></div><div class="a" style="left:318px;top:348px;width:10px;height:10px;border-radius:50%;background:#fff;border:1px solid;border-color:#404040 #d4d0c8 #d4d0c8 #404040"></div><div class="a" style="left:321px;top:351px;width:4px;height:4px;border-radius:1.500px;background:#000"></div><span class="t" style="left:333.70px;top:347px;transform:scaleX(0.9233)">Accurate</span><div class="a" style="left:317px;top:370px;width:12px;height:12px;border-radius:50%;border:1px solid;border-color:#808080 #fff #fff #808080;transform:rotate(0deg)"></div><div class="a" style="left:318px;top:371px;width:10px;height:10px;border-radius:50%;background:#fff;border:1px solid;border-color:#404040 #d4d0c8 #d4d0c8 #404040"></div><span class="t" style="left:333.80px;top:370px;transform:scaleX(0.8987)">Independent</span>
<div class="a grp" style="left:308px;top:401px;width:272px;height:58px"></div><div class="gl" style="left:317px;top:400px;width:93px"></div><span class="t" style="left:318.00px;top:396px;transform:scaleX(0.8658)">Image files format</span><div class="a" style="left:317px;top:417px;width:12px;height:12px;border-radius:50%;border:1px solid;border-color:#808080 #fff #fff #808080;transform:rotate(0deg)"></div><div class="a" style="left:318px;top:418px;width:10px;height:10px;border-radius:50%;background:#fff;border:1px solid;border-color:#404040 #d4d0c8 #d4d0c8 #404040"></div><span class="t" style="left:333.60px;top:417px;transform:scaleX(0.8724)">32-bit XRGB bitmap (BMP)</span><div class="a" style="left:317px;top:440px;width:12px;height:12px;border-radius:50%;border:1px solid;border-color:#808080 #fff #fff #808080;transform:rotate(0deg)"></div><div class="a" style="left:318px;top:441px;width:10px;height:10px;border-radius:50%;background:#fff;border:1px solid;border-color:#404040 #d4d0c8 #d4d0c8 #404040"></div><div class="a" style="left:321px;top:444px;width:4px;height:4px;border-radius:1.500px;background:#000"></div><span class="t" style="left:333.60px;top:440px;transform:scaleX(0.8902)">Portable network graphics (PNG)</span>
<div class="a btn" style="left:308px;top:479px;width:75px;height:23px"></div>
<span class="t" style="left:338.10px;top:483px;transform:scaleX(0.8850)">OK</span>
<div class="a btn" style="left:506px;top:479px;width:75px;height:23px"></div>
<span class="t" style="left:527.10px;top:483px;transform:scaleX(0.8850)">Cancel</span>
</body></html>
